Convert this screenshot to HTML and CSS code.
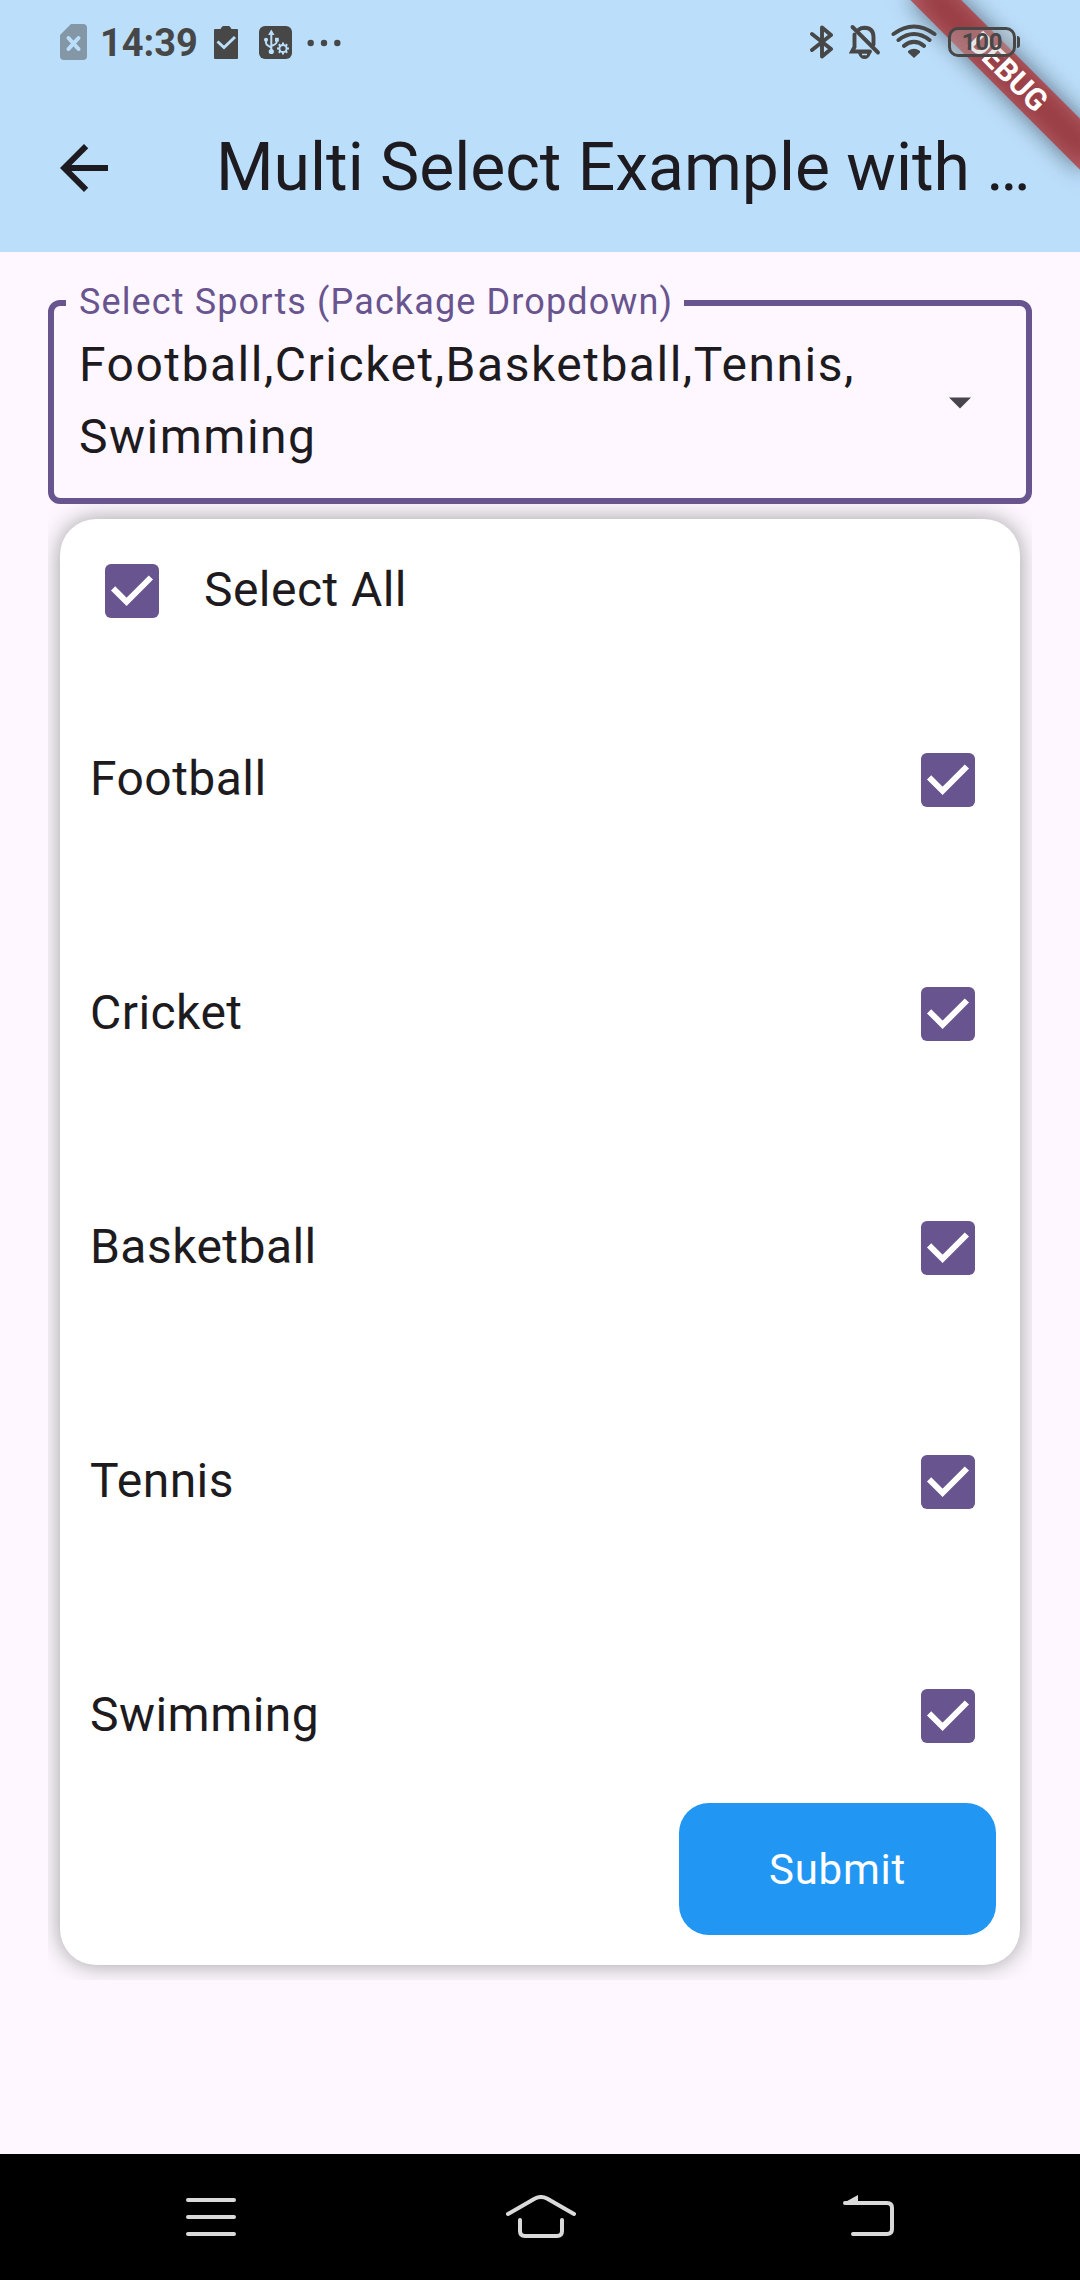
FILE: index.html
```html
<!DOCTYPE html>
<html lang="en">
<head>
<meta charset="utf-8">
<title>Multi Select Example</title>
<link rel="stylesheet" href="styles.css">
</head>
<body>
<svg class="defs" width="0" height="0">
  <symbol id="check" viewBox="0 0 54 54">
    <rect width="54" height="54" rx="6" fill="#68548e"/>
    <path d="M8.1 24.3 21.6 37.8 45.9 13.5" fill="none" stroke="#fff" stroke-width="6"/>
  </symbol>
</svg>
<div class="screen">
  <header class="top">
    <div class="status">
      <div class="status-left">
        <svg class="sim" width="27" height="36" viewBox="0 0 27 36"><path d="M11 0H23Q27 0 27 4V32Q27 36 23 36H4Q0 36 0 32V11Z" fill="#8497a6"/><path d="M8.500 14 18.500 25M18.500 14 8.500 25" stroke="#bbdefb" stroke-width="4" stroke-linecap="round"/></svg>
        <span class="time">14:39</span>
        <svg class="clip" width="24" height="33" viewBox="0 0 24 33"><path d="M1 3H6.500L8 .8Q8.500 0 9.500 0H14.500Q15.500 0 16 .8L17.500 3H23Q24 3 24 4V32Q24 33 23 33H1Q0 33 0 32V4Q0 3 1 3Z" fill="#474747"/><path d="M3.500 15.500 10 21.500 21 11" fill="none" stroke="#bbdefb" stroke-width="3"/></svg>
        <svg class="usb" width="33" height="33" viewBox="0 0 33 33"><rect width="33" height="33" rx="6" fill="#474747"/><g fill="none" stroke="#bbdefb" stroke-width="2"><path d="M12.300 7V25M7 14.500V17Q7 19 12.300 21.500M17.700 14V16Q17.700 18 12.300 20"/><circle cx="24" cy="22.500" r="3.600"/><path d="M24 16.500V19M24 26V28.500M18 22.500H20.500M27.500 22.500H30M19.800 18.300 21.500 20M26.500 25 28.200 26.700M28.200 18.300 26.500 20M21.500 25 19.800 26.700"/></g><g fill="#bbdefb"><path d="M12.300 3.500 15.500 9H9.100Z"/><circle cx="12.300" cy="25.500" r="2.600"/><circle cx="7" cy="13.800" r="2.100"/><rect x="16" y="11.800" width="3.800" height="3.800"/></g></svg>
        <svg class="dots" width="34" height="8" viewBox="0 0 34 8" fill="#474747"><circle cx="3.700" cy="4" r="3.200"/><circle cx="17" cy="4" r="3.200"/><circle cx="30.300" cy="4" r="3.200"/></svg>
      </div>
      <div class="status-right">
        <svg class="bt" width="24" height="36" viewBox="0 0 24 36"><path d="M2 10 21 25 12 32.500V3.500L21 11 2 26" fill="none" stroke="#474747" stroke-width="3.900" stroke-linejoin="round" stroke-linecap="round"/></svg>
        <svg class="bell" width="32" height="36" viewBox="0 0 32 36"><g fill="none" stroke="#474747" stroke-width="3.900" stroke-linecap="round"><path d="M5.500 10.500V23L3 27.500H21M10 5.500Q12 3.700 15.500 3.700Q24.500 4 24.500 13V20.500"/><path d="M3.500 3 29 28.500"/></g><path d="M9 29H22Q20 35 15.500 35T9 29Z" fill="#474747"/><path d="M13 30.500H18" stroke="#bbdefb" stroke-width="1.500"/></svg>
        <svg class="wifi" width="46" height="36" viewBox="0 0 46 36"><g fill="none" stroke="#474747" stroke-width="4" stroke-linecap="round"><path d="M2.500 10Q23-5 43.500 10M7.500 16Q23 4 38.500 16M13 21.800Q23 14 33 21.800"/></g><path d="M17 27Q23 22.500 29 27V28.500L23 34 17 28.500Z" fill="#474747"/></svg>
        <div class="battery">100</div>
      </div>
    </div>
    <div class="appbar">
      <svg class="back" width="48" height="48" viewBox="0 0 16 16"><path d="M16 7H3.830L9.420 1.410 8 0 0 8 8 16 9.410 14.590 3.830 9H16Z" fill="#1d1b20"/></svg>
      <h1 class="title">Multi Select Example with …</h1>
    </div>
    <div class="corner"><div class="ribbon-shadow"></div><div class="ribbon">DEBUG</div></div>
  </header>
  <main class="body">
    <div class="field">
      <div class="label">Select Sports (Package Dropdown)</div>
      <div class="value">Football,Cricket,Basketball,Tennis,<br>Swimming</div>
      <svg class="caret" width="24" height="12" viewBox="0 0 24 12"><path d="M1 .5H23L12 11.500Z" fill="#49454f"/></svg>
    </div>
    <div class="overlay">
      <div class="card">
        <div class="all"><svg class="box"><use href="#check"/></svg><span>Select All</span></div>
        <div class="row"><span>Football</span><svg class="box"><use href="#check"/></svg></div>
        <div class="row"><span>Cricket</span><svg class="box"><use href="#check"/></svg></div>
        <div class="row"><span>Basketball</span><svg class="box"><use href="#check"/></svg></div>
        <div class="row"><span>Tennis</span><svg class="box"><use href="#check"/></svg></div>
        <div class="row"><span>Swimming</span><svg class="box"><use href="#check"/></svg></div>
        <button class="submit">Submit</button>
      </div>
    </div>
  </main>
  <nav class="nav">
    <svg class="n1" width="50" height="44" viewBox="0 0 50 44"><path d="M2 5H48M2 22H48M2 39H48"/></svg>
    <svg class="n2" width="70" height="44" viewBox="0 0 70 44"><path d="M2 19 29 3.500Q35 .500 41 3.500L68 19M14 25V36Q14 41 19 41H51Q56 41 56 36V25"/></svg>
    <svg class="n3" width="52" height="44" viewBox="0 0 52 44"><path d="M2 8H44Q49 8 49 13V34Q49 39 44 39H10"/><path class="tip" d="M.5 8 15 0V9H1Z"/></svg>
  </nav>
</div>
</body>
</html>
```
FILE: styles.css
```css
* { box-sizing: border-box; }
body { margin: 0; background: #fef7ff; font-family: Roboto, sans-serif; color: #1d1b20; }
.defs { position: absolute; }
svg { display: block; flex: none; }
.screen { width: 1080px; height: 2280px; display: flex; flex-direction: column; overflow: hidden; }

.top { position: relative; height: 252px; background: #bbdefb; overflow: hidden; }
.status { height: 84px; padding: 24px 0 0 60px; display: flex; justify-content: space-between; }
.status-left, .status-right { position: relative; z-index: 2; display: flex; align-items: flex-start; }
.status-right { padding-right: 60px; }
.time { width: 99px; margin-left: 13px; font-size: 38px; font-weight: 700; line-height: 39px; color: #474747; }
.clip { margin: 2px 0 0 15px; }
.usb { margin: 2px 0 0 21px; }
.dots { margin: 15px 0 0 15px; }
.bell { margin-left: 15px; }
.wifi { margin-left: 10px; }
.battery { position: relative; width: 68px; height: 30px; margin: 3px 4px 0 11px; border: 3px solid #474747; border-radius: 10px; background: rgba(190, 190, 190, .35); font-size: 24px; font-weight: 700; line-height: 25px; letter-spacing: -.3px; text-align: center; color: #474747; }
.battery::after { content: ""; position: absolute; left: 66px; top: 6px; width: 3px; height: 12px; border-radius: 0 3px 3px 0; background: #474747; }

.appbar { height: 168px; display: flex; align-items: center; padding-left: 60px; }
.title { margin: 0 0 0 108px; font-size: 66px; font-weight: 400; line-height: 84px; white-space: nowrap; }

.corner { position: absolute; z-index: 1; left: 1080px; top: 0; width: 0; height: 0; transform: rotate(45deg); }
.ribbon, .ribbon-shadow { position: absolute; left: -120px; top: 84px; width: 240px; height: 36px; }
.ribbon-shadow { background: rgba(0, 0, 0, .5); filter: blur(12px); }
.ribbon { background: rgba(183, 28, 28, .63); color: #fff; font-size: 30.6px; font-weight: 700; line-height: 36px; text-align: center; }

.body { flex: 1; padding: 48px 48px 0; }
.field { position: relative; height: 204px; padding: 23px 60px 0 25px; border: 6px solid #68548e; border-radius: 12px; display: flex; justify-content: space-between; }
.label { position: absolute; left: 12px; top: -25px; width: 618px; padding-left: 13px; background: #fef7ff; font-size: 36px; line-height: 42px; letter-spacing: 1.125px; color: #68548e; white-space: nowrap; }
.value { font-size: 48px; line-height: 72px; letter-spacing: 1.5px; white-space: nowrap; }
.caret { margin: 68px -6px 0 0; }

.overlay { height: 1476px; padding: 15px 12px; overflow: hidden; }
.card { height: 1446px; border-radius: 36px; background: #fff; box-shadow: 0 0 23px #9e9e9e; display: flex; flex-direction: column; font-size: 48px; line-height: 72px; letter-spacing: .45px; }
.all { height: 144px; padding-left: 45px; display: flex; align-items: center; gap: 45px; }
.all span, .row span { position: relative; top: -1px; }
.box { width: 54px; height: 54px; }
.row { height: 234px; padding: 0 45px 0 30px; display: flex; align-items: center; justify-content: space-between; }
.submit { align-self: flex-end; flex: none; width: 317px; height: 132px; margin: -30px 24px 0 0; padding: 2px 0 0; border: 0; border-radius: 30px; background: #2196f3; color: #fff; font: 400 42px/60px Roboto, sans-serif; letter-spacing: .75px; }

.nav { height: 126px; background: #000; display: flex; padding: 41px 0 0 186px; }
.nav path { fill: none; stroke: #dadada; stroke-width: 4; stroke-linecap: round; stroke-linejoin: round; }
.nav .tip { fill: #dadada; stroke: none; }
.n2 { margin-left: 270px; }
.n3 { margin-left: 267px; }
```
